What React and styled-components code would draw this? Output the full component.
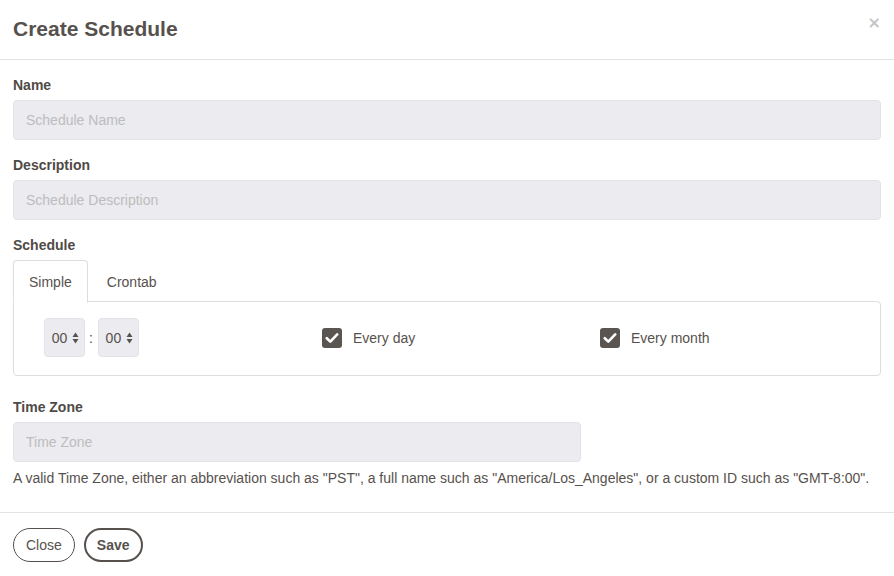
import React from 'react';
import styled, { createGlobalStyle } from 'styled-components';

const GlobalStyle = createGlobalStyle`
  body {
    margin: 0;
    background: #ffffff;
    font-family: "Liberation Sans", Arial, sans-serif;
    color: #57514d;
  }
`

const Modal = styled.div`
  width: 894px;
  background: #ffffff;
`

const Header = styled.div`
  display: flex;
  justify-content: space-between;
  align-items: flex-start;
  height: 60px;
  padding: 0 13px;
  border-bottom: 1px solid #e3e3e3;
  box-sizing: border-box;
`

const Title = styled.h4`
  margin: 17px 0 0;
  font-size: 21px;
  line-height: 24px;
  font-weight: 700;
  color: #57514d;
`

const CloseX = styled.button`
  border: 0;
  background: none;
  padding: 0;
  margin: 13px 0 0 0;
  font-size: 16px;
  font-weight: 700;
  color: #c4c4c4;
  cursor: pointer;
  font-family: "DejaVu Sans", sans-serif;
`

const Body = styled.div`
  padding: 15px 13px 24px;
`

const Label = styled.label`
  display: block;
  font-size: 14px;
  font-weight: 700;
  line-height: 20px;
  margin-bottom: 5px;
  color: #4f4a46;
`

const Field = styled.div`
  margin-bottom: ${p => p.gap || 15}px;
`

const Input = styled.input`
  display: block;
  box-sizing: border-box;
  width: ${p => p.width || '100%'};
  height: 40px;
  padding: 0 12px;
  border: 1px solid #e2e2e8;
  border-radius: 4px;
  background: #ebebf0;
  font-family: inherit;
  font-size: 14px;
  color: #57514d;
  &::placeholder {
    color: #bdbdbd;
  }
`

const Tabs = styled.div`
  display: flex;
  height: 42px;
  margin-bottom: -1px;
  position: relative;
`

const Tab = styled.div`
  box-sizing: border-box;
  height: 43px;
  padding: 0 15px;
  margin-right: 3px;
  display: flex;
  align-items: center;
  font-size: 14px;
  color: #57514d;
  border: 1px solid ${p => (p.active ? '#dddddd' : 'transparent')};
  border-bottom-color: ${p => (p.active ? '#ffffff' : 'transparent')};
  border-radius: 4px 4px 0 0;
  background: ${p => (p.active ? '#ffffff' : 'transparent')};
`

const Panel = styled.div`
  display: grid;
  grid-template-columns: 278px 278px 278px;
  align-items: center;
  padding: 16px 30px 18px;
  border: 1px solid #dddddd;
  border-radius: 0 4px 4px 4px;
`

const TimeRow = styled.div`
  display: flex;
  align-items: center;
`

const TimeSelect = styled.div`
  box-sizing: border-box;
  width: 41px;
  height: 39px;
  display: flex;
  align-items: center;
  justify-content: center;
  gap: 5px;
  padding-left: 2px;
  background: #ebebf0;
  border: 1px solid #e2e2e8;
  border-radius: 4px;
  font-size: 14px;
  color: #57514d;
`

const Colon = styled.span`
  margin: 0 5px 0 4px;
  font-size: 14px;
  color: #57514d;
`

const CheckItem = styled.label`
  display: flex;
  align-items: center;
  gap: 11px;
  font-size: 14px;
  color: #57514d;
`

const Box = styled.span`
  width: 20px;
  height: 20px;
  border-radius: 3px;
  background: #5b5551;
  display: flex;
  align-items: center;
  justify-content: center;
`

const Help = styled.p`
  margin: 6px 0 0;
  font-size: 14px;
  line-height: 20px;
  color: #57514d;
`

const Footer = styled.div`
  display: flex;
  gap: 9px;
  padding: 15px 13px;
  border-top: 1px solid #e3e3e3;
`

const Button = styled.button`
  box-sizing: border-box;
  height: 34px;
  padding: 0 ${p => (p.primary ? 11 : 12)}px;
  border: ${p => (p.primary ? 2 : 1)}px solid #57514d;
  border-radius: 17px;
  background: #ffffff;
  font-family: inherit;
  font-size: 14px;
  font-weight: ${p => (p.primary ? 700 : 400)};
  color: #57514d;
`

const Arrows = () => (
  <svg width="7" height="12" viewBox="0 0 7 12">
    <path d="M3.5 0.5 L6.5 5 L0.5 5 Z" fill="#57514d" />
    <path d="M3.5 11.5 L6.5 7 L0.5 7 Z" fill="#57514d" />
  </svg>
)

const Check = ({ label }) => (
  <CheckItem>
    <Box>
      <svg width="14" height="12" viewBox="0 0 14 12">
        <path d="M1.8 6.2 L5.3 9.6 L12.2 2.4" stroke="#ffffff" strokeWidth="2.6" fill="none" strokeLinecap="round" strokeLinejoin="round" />
      </svg>
    </Box>
    {label}
  </CheckItem>
)

export default function App() {
  return (
    <Modal>
      <GlobalStyle />
      <Header>
        <Title>Create Schedule</Title>
        <CloseX>×</CloseX>
      </Header>
      <Body>
        <Field>
          <Label>Name</Label>
          <Input placeholder="Schedule Name" />
        </Field>
        <Field>
          <Label>Description</Label>
          <Input placeholder="Schedule Description" />
        </Field>
        <Field gap={21}>
          <Label>Schedule</Label>
          <Tabs>
            <Tab active>Simple</Tab>
            <Tab>Crontab</Tab>
          </Tabs>
          <Panel>
            <TimeRow>
              <TimeSelect>00<Arrows /></TimeSelect>
              <Colon>:</Colon>
              <TimeSelect>00<Arrows /></TimeSelect>
            </TimeRow>
            <Check label="Every day" />
            <Check label="Every month" />
          </Panel>
        </Field>
        <div>
          <Label>Time Zone</Label>
          <Input width="568px" placeholder="Time Zone" />
          <Help>
            A valid Time Zone, either an abbreviation such as "PST", a full name such as "America/Los_Angeles", or a custom ID such as "GMT-8:00".
          </Help>
        </div>
      </Body>
      <Footer>
        <Button>Close</Button>
        <Button primary>Save</Button>
      </Footer>
    </Modal>
  );
}
